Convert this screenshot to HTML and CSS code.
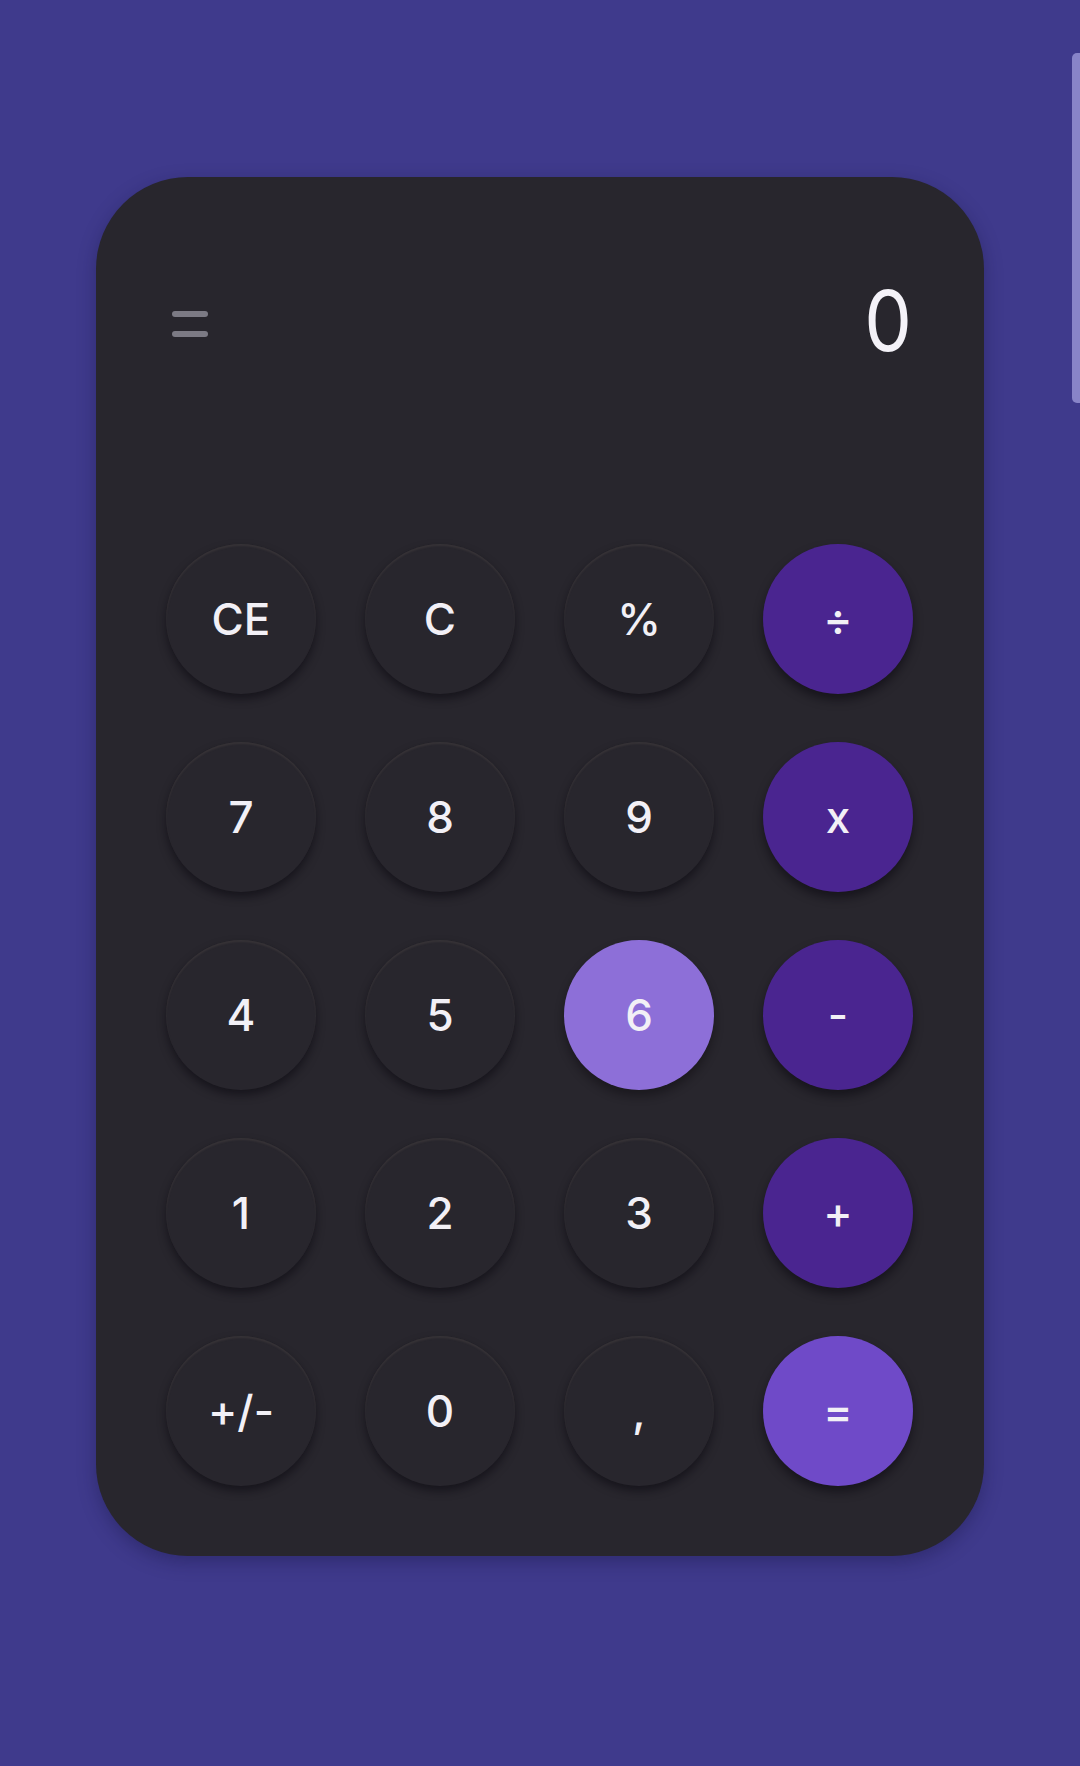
FILE: index.html
```html
<!DOCTYPE html>
<html lang="en">
<head>
<meta charset="utf-8">
<title>Calculator</title>
<link rel="stylesheet" href="styles.css">
</head>
<body>
<div class="scroll-thumb"></div>
<main class="page">
  <section class="calc">
    <header class="calc-head">
      <button class="menu" aria-label="Menu"><span class="bar"></span><span class="bar"></span></button>
      <div class="display">0</div>
    </header>
    <div class="keys">
      <button class="key">CE</button>
      <button class="key">C</button>
      <button class="key">%</button>
      <button class="key op">÷</button>
      <button class="key">7</button>
      <button class="key">8</button>
      <button class="key">9</button>
      <button class="key op">x</button>
      <button class="key">4</button>
      <button class="key">5</button>
      <button class="key active">6</button>
      <button class="key op">-</button>
      <button class="key">1</button>
      <button class="key">2</button>
      <button class="key">3</button>
      <button class="key op">+</button>
      <button class="key">+/-</button>
      <button class="key">0</button>
      <button class="key">,</button>
      <button class="key eq">=</button>
    </div>
  </section>
</main>
</body>
</html>
```
FILE: styles.css
```css
html, body {
  margin: 0;
  padding: 0;
}
body {
  background: #3f3a8c;
  min-height: 1766px;
  font-family: Inter, "Open Sans", sans-serif;
  overflow: hidden;
}
.scroll-thumb {
  position: fixed;
  top: 53px;
  right: 0;
  width: 8px;
  height: 350px;
  background: #8884c8;
  border-radius: 5px 0 0 5px;
}
.page {
  display: flex;
  justify-content: center;
  padding-top: 177px;
}
.calc {
  width: 748px;
  padding: 80px 70px 70px;
  background: #28262d;
  border-radius: 92px;
  box-shadow: 0 6px 18px rgba(20, 16, 60, 0.35);
}
.calc-head {
  display: flex;
  align-items: center;
  justify-content: space-between;
  height: 128px;
  padding: 0 2px 0 6px;
  margin-bottom: 159px;
}
.menu {
  display: flex;
  flex-direction: column;
  gap: 14px;
  padding: 0;
  margin-top: 6px;
  border: 0;
  background: none;
}
.bar {
  display: block;
  width: 36px;
  height: 6px;
  border-radius: 3px;
  background: #7c7a84;
}
.display {
  color: #f4f2f8;
  font-size: 84px;
  font-weight: 400;
  line-height: 1;
  transform: scaleX(0.9);
  transform-origin: right center;
}
.keys {
  display: grid;
  grid-template-columns: repeat(4, 150px);
  column-gap: 49px;
  row-gap: 48px;
}
.key {
  width: 150px;
  height: 150px;
  border-radius: 50%;
  border: 0;
  padding: 0;
  background: #28262d;
  color: #f2f0f6;
  font-family: Inter, "Open Sans", sans-serif;
  font-size: 44px;
  font-weight: 500;
  box-shadow: 0 5px 8px rgba(10, 8, 14, 0.55), inset 0 2px 2px rgba(120, 110, 100, 0.18);
}
.key.op {
  background: #4a2590;
  box-shadow: 0 6px 10px rgba(10, 8, 14, 0.55);
}
.key.active {
  background: #8d6fd8;
  box-shadow: 0 6px 10px rgba(10, 8, 14, 0.45);
}
.key.eq {
  background: #6f4ac8;
  box-shadow: 0 6px 10px rgba(10, 8, 14, 0.55);
}
```
